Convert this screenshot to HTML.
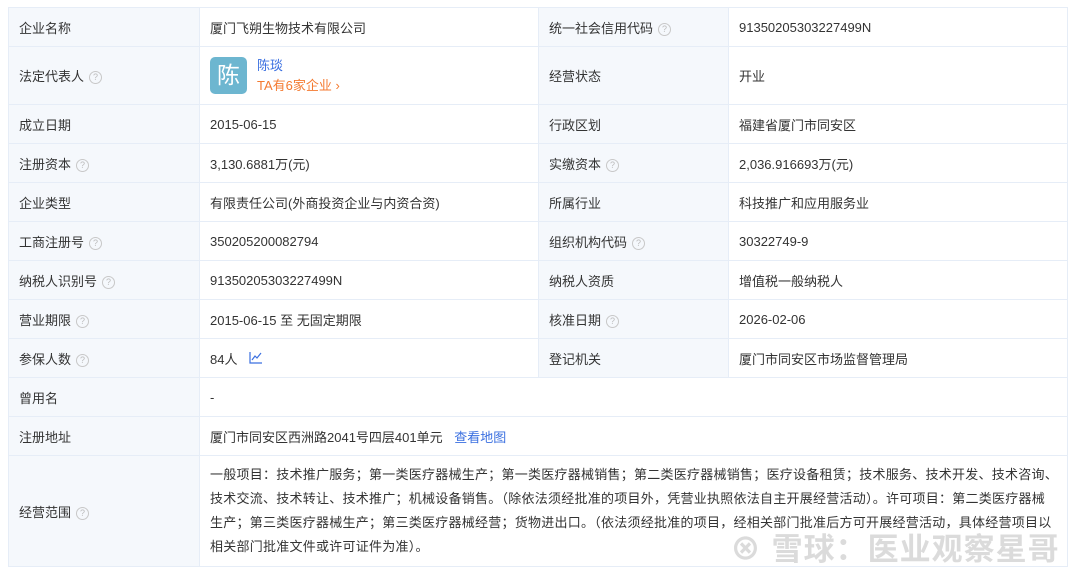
<!DOCTYPE html>
<html><head><meta charset="utf-8"><style>
body{margin:0;background:#fff;width:1080px;height:575px;overflow:hidden;font-family:"Liberation Sans","Noto Sans CJK SC",sans-serif;font-size:13px;color:#333}
table{position:absolute;left:8px;top:7px;border-collapse:collapse;table-layout:fixed;width:1059px}
td{border:1px solid #e6edf7;padding:0 10px;height:38px;vertical-align:middle;white-space:nowrap}
td.l{background:#f5f8fc}
.q{display:inline-block;width:11px;height:11px;border:1px solid #c8c8c8;border-radius:50%;font-size:9px;line-height:11px;text-align:center;color:#bbb;margin-left:5px;vertical-align:1px}
.b{color:#3a6fe0}
.av{display:inline-block;width:37px;height:37px;background:#6db6d0;border-radius:5px;color:#fff;font-size:23px;line-height:37px;text-align:center;vertical-align:middle;margin-right:10px}
.scope{white-space:nowrap;line-height:24px;padding:7px 10px;font-size:13px;letter-spacing:0.25px}
.wm{position:absolute;left:730px;top:524px;font-size:31px;color:rgba(200,200,200,.65);font-weight:bold;letter-spacing:1px;white-space:nowrap}
</style></head><body>
<table>
<colgroup><col style="width:191px"><col style="width:339px"><col style="width:190px"><col style="width:339px"></colgroup>
<tr><td class="l">企业名称</td><td>厦门飞朔生物技术有限公司</td><td class="l">统一社会信用代码<span class="q">?</span></td><td>91350205303227499N</td></tr>
<tr><td class="l" style="height:57px">法定代表人<span class="q">?</span></td><td><span class="av">陈</span><span style="display:inline-block;vertical-align:middle;line-height:20px"><span class="b">陈琰</span><br><span style="color:#f47a30">TA有6家企业 ›</span></span></td><td class="l">经营状态</td><td>开业</td></tr>
<tr><td class="l">成立日期</td><td>2015-06-15</td><td class="l">行政区划</td><td>福建省厦门市同安区</td></tr>
<tr><td class="l">注册资本<span class="q">?</span></td><td>3,130.6881万(元)</td><td class="l">实缴资本<span class="q">?</span></td><td>2,036.916693万(元)</td></tr>
<tr><td class="l">企业类型</td><td>有限责任公司(外商投资企业与内资合资)</td><td class="l">所属行业</td><td>科技推广和应用服务业</td></tr>
<tr><td class="l">工商注册号<span class="q">?</span></td><td>350205200082794</td><td class="l">组织机构代码<span class="q">?</span></td><td>30322749-9</td></tr>
<tr><td class="l">纳税人识别号<span class="q">?</span></td><td>91350205303227499N</td><td class="l">纳税人资质</td><td>增值税一般纳税人</td></tr>
<tr><td class="l">营业期限<span class="q">?</span></td><td>2015-06-15 至 无固定期限</td><td class="l">核准日期<span class="q">?</span></td><td>2026-02-06</td></tr>
<tr><td class="l">参保人数<span class="q">?</span></td><td>84人 <svg width="14" height="12" style="margin-left:8px;vertical-align:0" viewBox="0 0 14 12"><path d="M1 0V11H13M3 8L6 4L8 6L12 1" fill="none" stroke="#3a6fe0" stroke-width="1.2"/></svg></td><td class="l">登记机关</td><td>厦门市同安区市场监督管理局</td></tr>
<tr><td class="l">曾用名</td><td colspan="3">-</td></tr>
<tr><td class="l">注册地址</td><td colspan="3">厦门市同安区西洲路2041号四层401单元 <span class="b" style="margin-left:8px">查看地图</span></td></tr>
<tr><td class="l">经营范围<span class="q">?</span></td><td colspan="3" class="scope">一般项目：技术推广服务；第一类医疗器械生产；第一类医疗器械销售；第二类医疗器械销售；医疗设备租赁；技术服务、技术开发、技术咨询、<br>技术交流、技术转让、技术推广；机械设备销售。（除依法须经批准的项目外，凭营业执照依法自主开展经营活动）。许可项目：第二类医疗器械<br>生产；第三类医疗器械生产；第三类医疗器械经营；货物进出口。（依法须经批准的项目，经相关部门批准后方可开展经营活动，具体经营项目以<br>相关部门批准文件或许可证件为准）。</td></tr>
</table>
<div class="wm">⊗ 雪球：医业观察星哥</div>
</body></html>
